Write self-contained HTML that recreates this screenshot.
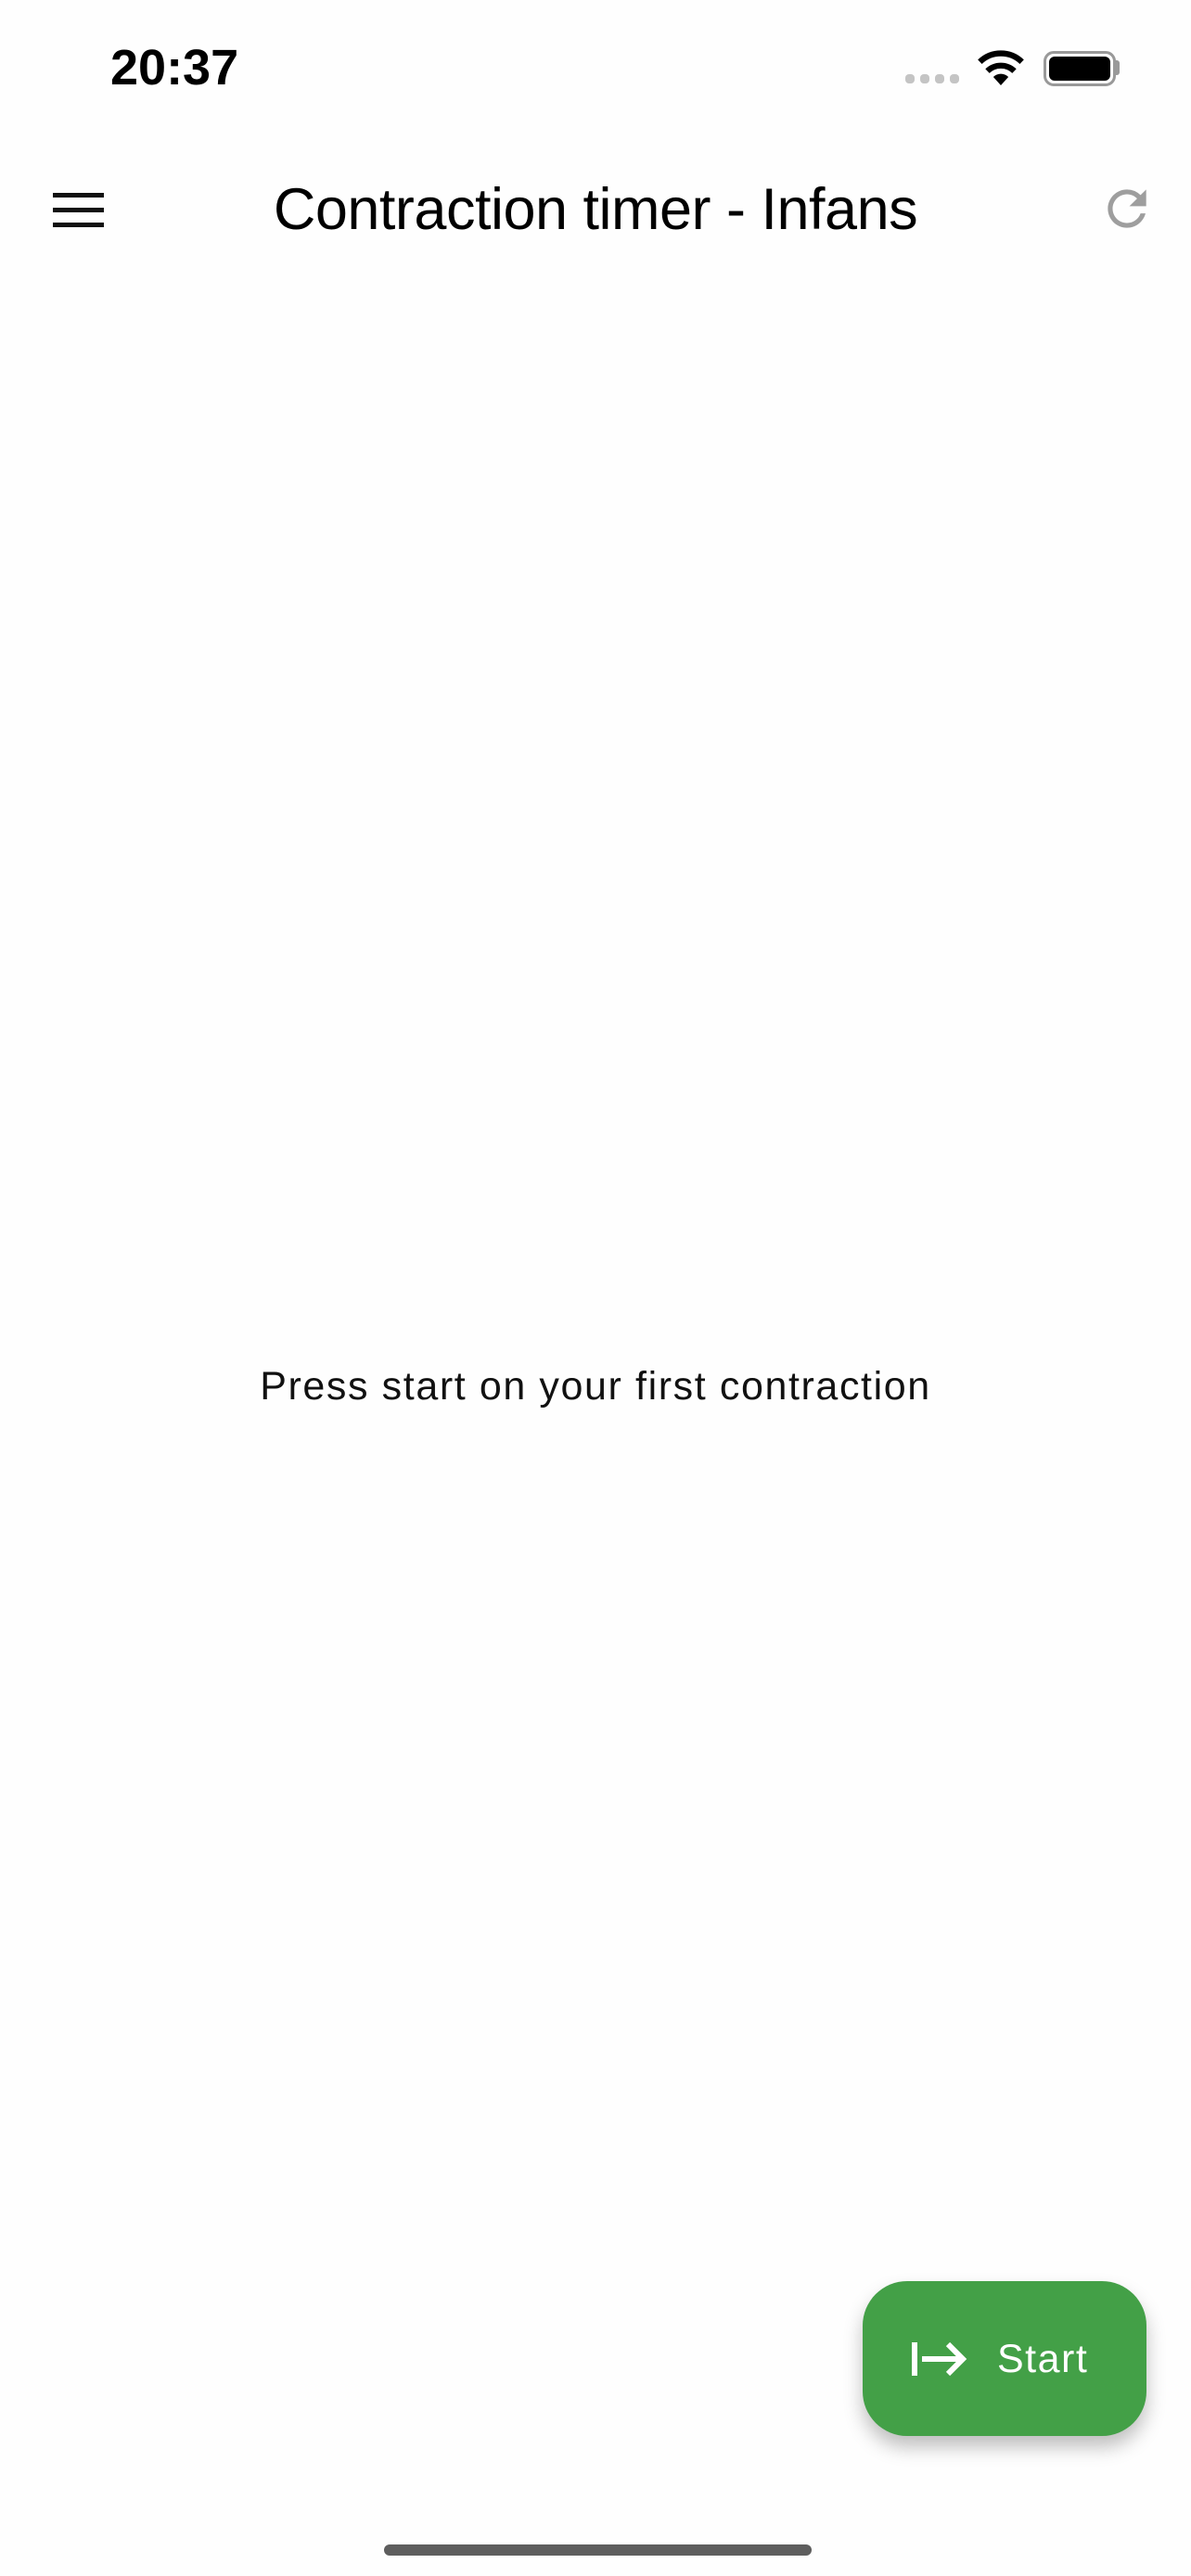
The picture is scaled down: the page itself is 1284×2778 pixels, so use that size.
<!DOCTYPE html>
<html><head><meta charset="utf-8"><style>
html,body{margin:0;padding:0;background:#fefefe;}
body{width:1284px;height:2778px;position:relative;overflow:hidden;font-family:"Liberation Sans",sans-serif;}
.abs{position:absolute;}
</style></head><body>
<div class="abs" style="left:119px;top:42px;font-size:54px;font-weight:bold;letter-spacing:0px;line-height:62px;color:#000;">20:37</div>
<div class="abs" style="left:976px;top:80px;width:10px;height:10px;border-radius:4px;background:#c4c4c4"></div>
<div class="abs" style="left:992px;top:80px;width:10px;height:10px;border-radius:4px;background:#c4c4c4"></div>
<div class="abs" style="left:1008px;top:80px;width:10px;height:10px;border-radius:4px;background:#c4c4c4"></div>
<div class="abs" style="left:1024px;top:80px;width:10px;height:10px;border-radius:4px;background:#c4c4c4"></div>
<svg class="abs" style="left:1052px;top:54px" width="54" height="38" viewBox="0 0 58 42">
<path d="M29 42 L20 32 A13 13 0 0 1 38 32 Z" fill="#000"/>
<path d="M13 25 A23 23 0 0 1 45 25" stroke="#000" stroke-width="7" fill="none"/>
<path d="M4 14 A36 36 0 0 1 54 14" stroke="#000" stroke-width="7" fill="none"/>
</svg>
<div class="abs" style="left:1125px;top:55px;width:72px;height:32px;border:3px solid #999;border-radius:11px;"></div>
<div class="abs" style="left:1131px;top:61px;width:66px;height:26px;background:#000;border-radius:6px;"></div>
<div class="abs" style="left:1202px;top:65px;width:5px;height:16px;background:#999;border-radius:0 3px 3px 0;"></div>

<div class="abs" style="left:57px;top:208px;width:55px;height:5px;background:#111"></div>
<div class="abs" style="left:57px;top:224px;width:55px;height:5px;background:#111"></div>
<div class="abs" style="left:57px;top:240px;width:55px;height:5px;background:#111"></div>
<div class="abs" style="left:0;width:1284px;text-align:center;top:190px;font-size:63px;line-height:72px;color:#000;letter-spacing:-0.5px;">Contraction timer - Infans</div>
<svg class="abs" style="left:1184px;top:194px" width="62" height="62" viewBox="0 0 24 24"><path fill="#9e9e9e" d="M17.65 6.35A7.958 7.958 0 0 0 12 4c-4.420 0-7.99 3.58-7.99 8s3.57 8 7.99 8c3.73 0 6.84-2.55 7.730-6h-2.08A5.99 5.99 0 0 1 12 18c-3.31 0-6-2.69-6-6s2.69-6 6-6c1.66 0 3.14.69 4.22 1.78L13 11h7V4l-2.35 2.35z"/></svg>

<div class="abs" style="left:0;width:1284px;text-align:center;top:1470px;font-size:43px;line-height:50px;letter-spacing:1.6px;color:#111;">Press start on your first contraction</div>

<div class="abs" style="left:930px;top:2460px;width:306px;height:167px;border-radius:48px;background:#43a047;box-shadow:0 12px 20px rgba(0,0,0,0.25);"></div>
<div class="abs" style="left:983px;top:2526px;width:6px;height:36px;background:#fff"></div>
<svg class="abs" style="left:994px;top:2526px" width="52" height="38" viewBox="0 0 52 38"><path d="M0 18 H44 M28 2 L44 18 L28 34" stroke="#fff" stroke-width="6" fill="none"/></svg>
<div class="abs" style="left:1075px;top:2520px;font-size:43px;line-height:48px;color:#fff;letter-spacing:1.5px;">Start</div>

<div class="abs" style="left:414px;top:2744px;width:461px;height:12px;border-radius:6px;background:#5e5e5e"></div>
</body></html>
